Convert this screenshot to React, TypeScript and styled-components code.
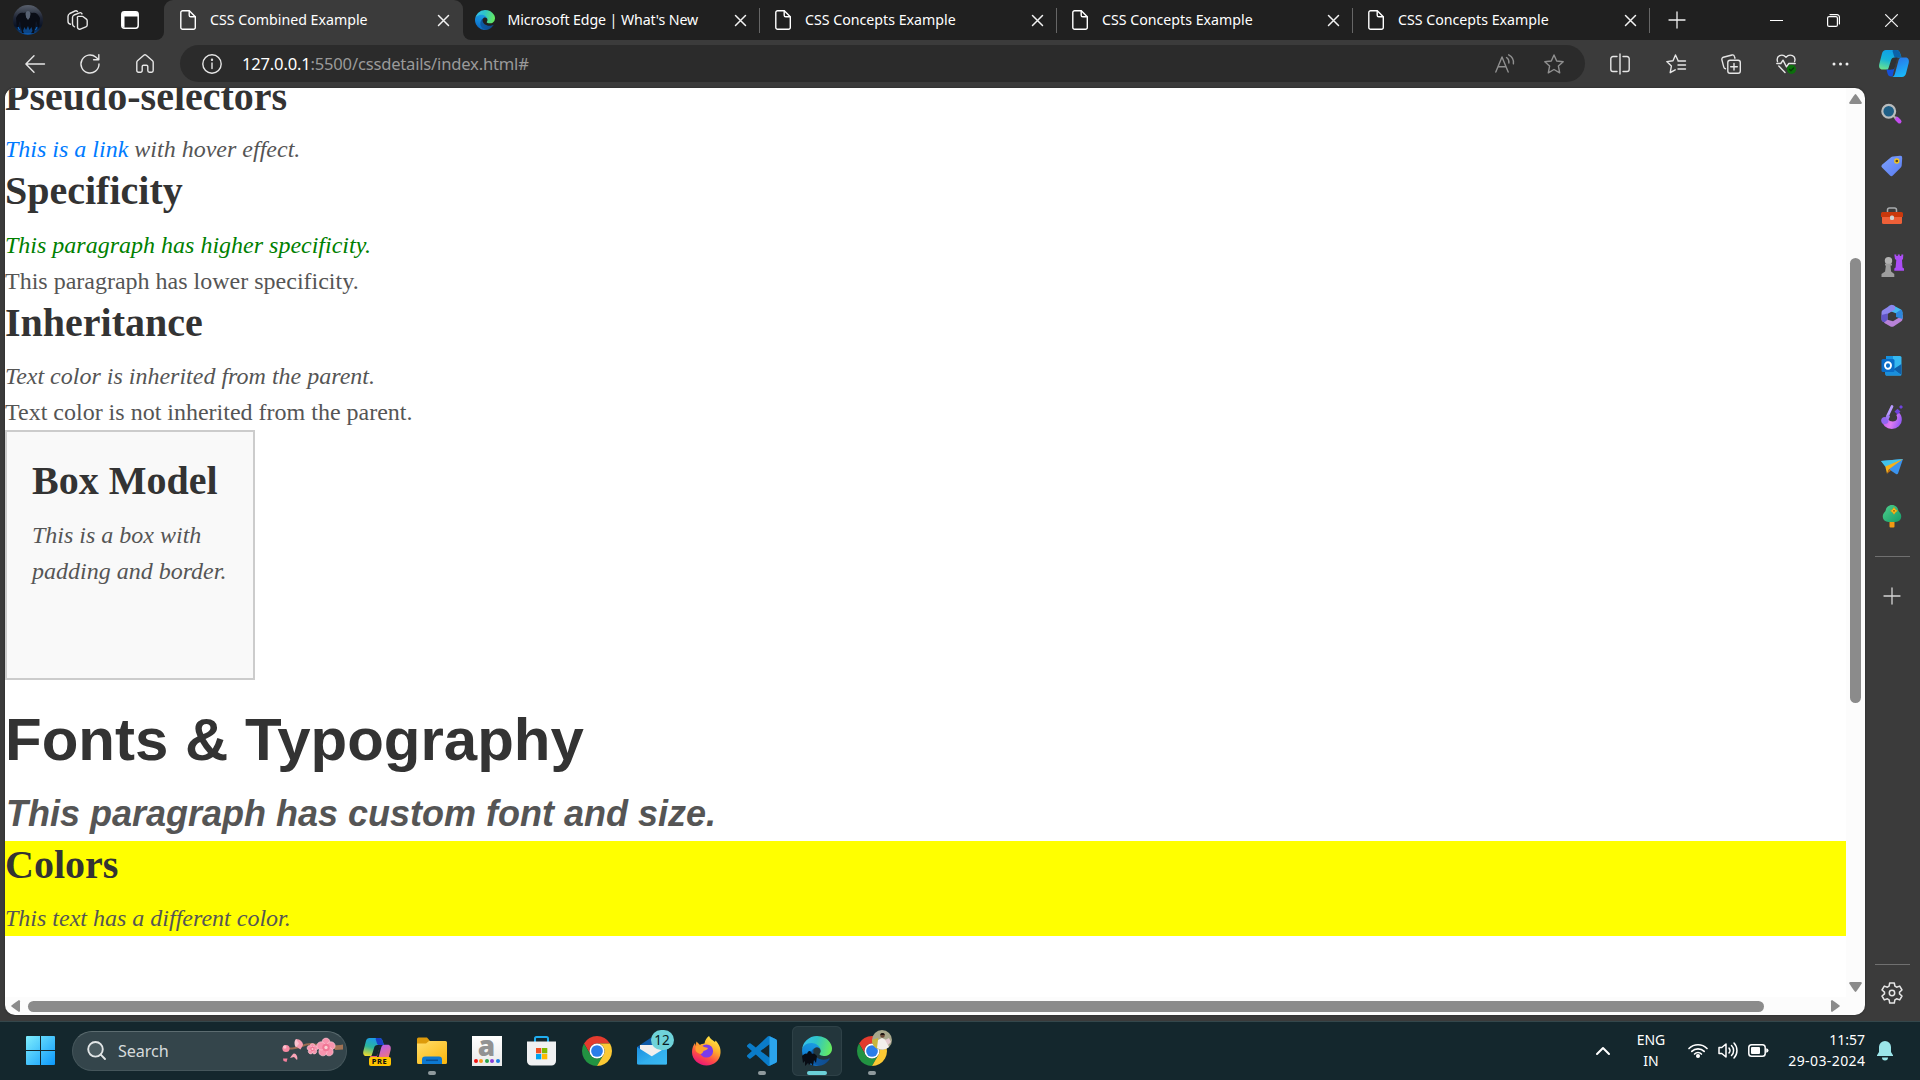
import React from "react";
import styled, { createGlobalStyle } from "styled-components";

const uiFont = `"Segoe UI", "Noto Sans", "Open Sans", sans-serif`;

const Global = createGlobalStyle`
  * { box-sizing: border-box; }
  body { margin: 0; overflow: hidden; background: #3b3b3b; font-family: ${uiFont}; }
  svg { display: block; flex: none; overflow: visible; }
`;

/* ---------- window frame ---------- */

const Screen = styled.div`
  width: 1920px;
  height: 1080px;
  display: flex;
  flex-direction: column;
  background: #3b3b3b;
  overflow: hidden;
`;

const TabStrip = styled.header`
  height: 40px;
  display: flex;
  background: #3b3b3b;
  color: #fff;
`;

const StripStart = styled.div`
  width: 164px;
  display: flex;
  align-items: center;
  background: #202020;
  border-bottom-right-radius: 8px;
`;

const StripRest = styled.div`
  flex: 1;
  display: flex;
  align-items: center;
  background: #202020;
  border-bottom-left-radius: 8px;
`;

const Slot = styled.div<{ $w: number; $h?: number }>`
  width: ${(p) => p.$w}px;
  ${(p) => (p.$h ? `height: ${p.$h}px;` : "")}
  flex: none;
  display: flex;
  align-items: center;
  justify-content: center;
`;

const ActiveBack = styled.div`
  width: 299px;
  background: linear-gradient(#202020 50%, #3b3b3b 50%);
`;

const Tab = styled.div<{ $w: number; $pad: number; $active?: boolean }>`
  width: ${(p) => p.$w}px;
  height: 40px;
  flex: none;
  display: flex;
  align-items: center;
  padding-left: ${(p) => p.$pad}px;
  border-radius: 9px 9px 0 0;
  background: ${(p) => (p.$active ? "#3b3b3b" : "transparent")};
`;

const TabTitle = styled.span<{ $gap: number; $tight?: boolean }>`
  flex: 1;
  margin-left: ${(p) => p.$gap}px;
  font-size: 14.2px;
  letter-spacing: ${(p) => (p.$tight ? "-0.1px" : "0")};
  line-height: 20px;
  white-space: nowrap;
`;

const TabEnd = styled.div<{ $line?: boolean }>`
  width: 38px;
  height: 25px;
  display: flex;
  align-items: center;
  justify-content: center;
  border-right: 1px solid ${(p) => (p.$line ? "#666" : "transparent")};
`;

const Spacer = styled.div`
  flex: 1;
`;

const Toolbar = styled.nav`
  height: 48px;
  display: flex;
  align-items: center;
  padding: 0 0 1px 7px;
  color: #e6e6e6;
`;

const AddressBar = styled.div`
  width: 1405px;
  height: 37px;
  margin-left: 8px;
  border-radius: 19px;
  background: #2b2b2b;
  display: flex;
  align-items: center;
  padding: 0 8px 0 10px;
`;

const Url = styled.span`
  flex: 1;
  margin-left: 8px;
  font-size: 16.6px;
  letter-spacing: -0.2px;
  color: #9a9a9a;
  b { font-weight: 400; color: #fff; }
`;

/* ---------- page ---------- */

const Middle = styled.main`
  height: 933px;
  display: flex;
  padding-left: 5px;
`;

const Viewport = styled.div`
  width: 1860px;
  height: 927px;
  display: grid;
  grid-template-columns: 1841px 19px;
  grid-template-rows: 909px 18px;
  background: #fcfcfc;
  border-radius: 10px;
  overflow: hidden;
  box-shadow: 0 0 2px #222;
`;

const Doc = styled.article`
  overflow: hidden;
  background: #fff;
  color: #555;
  font-family: "Times New Roman", "Liberation Serif", serif;
  font-size: 24px;
  line-height: 36px;
`;

const Scrolled = styled.div`
  margin-top: -14px;
`;

const H2 = styled.h2<{ $before?: number; $after?: number }>`
  margin: 0;
  padding: ${(p) => p.$before ?? 0}px 0 ${(p) => p.$after ?? 12.5}px;
  font-size: 40px;
  line-height: 46px;
  color: #333;
`;

const H1 = styled.h1`
  margin: 25px 0 13.5px;
  font-family: Arial, "Liberation Sans", sans-serif;
  font-size: 60px;
  line-height: 69px;
  color: #333;
`;

const P = styled.p<{ $plain?: boolean; $green?: boolean }>`
  margin: 0;
  font-style: ${(p) => (p.$plain ? "normal" : "italic")};
  color: ${(p) => (p.$green ? "#008000" : "#555")};
`;

const CustomP = styled(P)`
  padding-left: 1px;
  font-family: Arial, "Liberation Sans", sans-serif;
  font-weight: 700;
  font-size: 36px;
  line-height: 54px;
`;

const Link = styled.a`
  color: #007bff;
`;

const Box = styled.section`
  width: 250px;
  height: 250px;
  padding: 25px;
  border: 2px solid #ccc;
  background: #f9f9f9;
`;

const Yellow = styled.section`
  background: #ff0;
`;

const VScroll = styled.div`
  display: flex;
  flex-direction: column;
  align-items: center;
  padding: 6px 0 5px 0;
  justify-content: space-between;
`;

const HScroll = styled.div`
  display: flex;
  align-items: center;
  padding: 0 6px 0 6px;
  justify-content: space-between;
`;

const Thumb = styled.div<{ $vertical?: boolean }>`
  background: #8b8b8b;
  border-radius: 6px;
  ${(p) =>
    p.$vertical
      ? "width: 11px; height: 445px; margin: 154px 0 auto;"
      : "width: 1736px; height: 11px; margin: 0 auto 0 8px;"}
`;

const Sidebar = styled.aside`
  width: 55px;
  padding-right: 1px;
  display: flex;
  flex-direction: column;
  align-items: center;
  color: #ddd;
`;

const SideRule = styled.div`
  width: 35px;
  height: 1px;
  background: #707070;
`;

/* ---------- taskbar ---------- */

const Taskbar = styled.footer`
  height: 59px;
  display: flex;
  align-items: center;
  padding-bottom: 1px;
  background: #14272d;
  border-top: 1px solid #34474b;
  color: #fff;
`;

const SearchBox = styled.div`
  width: 275px;
  height: 40px;
  margin: 0 2px 0 17px;
  border-radius: 20px;
  border: 1px solid #45565b;
  border-top-color: #5c6c70;
  background: #34454b;
  display: flex;
  align-items: center;
  padding: 0 3px 0 14px;
`;

const SearchLabel = styled.span`
  flex: 1;
  margin-left: 12px;
  font-size: 16.2px;
  letter-spacing: -0.1px;
  color: #d6dbdc;
`;

const AppSlot = styled.div<{ $focused?: boolean }>`
  position: relative;
  width: 50px;
  height: 50px;
  margin: 0 2.5px;
  flex: none;
  border-radius: 6px;
  display: flex;
  align-items: center;
  justify-content: center;
  background: ${(p) => (p.$focused ? "#23363c" : "transparent")};
  box-shadow: ${(p) => (p.$focused ? "inset 0 0 0 1px #2e4147" : "none")};
`;

const Indicator = styled.i<{ $focused?: boolean }>`
  position: absolute;
  bottom: 1px;
  left: 50%;
  transform: translateX(-50%);
  width: ${(p) => (p.$focused ? 20 : 8)}px;
  height: 4px;
  border-radius: 2px;
  background: ${(p) => (p.$focused ? "#6bd0d8" : "#8f9a9d")};
`;

const Badge = styled.span`
  position: absolute;
  top: 4px;
  left: 24px;
  width: 23px;
  height: 20px;
  border-radius: 10px;
  background: #6fd3da;
  color: #0b1d22;
  font-size: 13.5px;
  line-height: 20px;
  text-align: center;
`;

const Pre = styled.span`
  position: absolute;
  top: 31px;
  left: 17px;
  width: 22px;
  height: 9px;
  border-radius: 2px;
  background: #ffc400;
  color: #111;
  font-size: 7.5px;
  font-weight: 800;
  letter-spacing: 0.5px;
  line-height: 9px;
  text-align: center;
`;

const ATile = styled.div`
  width: 30px;
  height: 30px;
  background: linear-gradient(#fff, #e8e8e8);
  display: flex;
  flex-direction: column;
  align-items: center;
  span {
    font: 800 28px/22px "Open Sans", sans-serif;
    height: 20px;
    margin-top: -2px;
    color: #929292;
  }
`;

const Dots = styled.div`
  display: flex;
  gap: 1.5px;
  margin-top: 5px;
`;

const Dot = styled.i<{ $c: string }>`
  width: 4px;
  height: 4px;
  border-radius: 50%;
  background: ${(p) => p.$c};
`;

const TrayText = styled.div<{ $align: string; $w: number }>`
  width: ${(p) => p.$w}px;
  text-align: ${(p) => p.$align};
  font-size: 14px;
  line-height: 20.5px;
  white-space: nowrap;
`;

const DateText = styled.span`
  letter-spacing: 0.4px;
  margin-right: -0.4px;
`;

/* ---------- icons ---------- */

const line = { fill: "none", stroke: "currentColor", strokeWidth: 1.4, strokeLinecap: "round", strokeLinejoin: "round" } as const;

const Avatar = () => (
  <svg width="30" height="30" viewBox="0 0 30 30">
    <defs>
      <linearGradient id="av" x2="0" y2="1"><stop stopColor="#59606c" /><stop offset=".4" stopColor="#222838" /><stop offset=".7" stopColor="#0a1326" /><stop offset="1" stopColor="#0b4f9c" /></linearGradient>
    </defs>
    <circle cx="15" cy="15" r="15" fill="url(#av)" />
    <path d="M3 13c2-5 5-6 8-5 1-1 7-1 8 0 3-1 6 0 8 5l-1 11-3-8-2 12h-12L7 16l-3 8z" fill="#0a0d16" />
    <path d="M12.500 9c0-4 5-4 5 0l-.7 3.500L15 15l-1.800-2.500z" fill="#586273" />
    <path d="M10 26l1.500-4 1.500 3 2-4 1.500 4 2-3 1 4-2 3h-6z" fill="#0d5fb8" opacity=".7" />
    <path d="M5 22l1.500 3M24 22l-1.500 3" stroke="#0d6fd0" strokeWidth="1" />
  </svg>
);

const Workspaces = () => (
  <svg width="21" height="20" viewBox="0 0 21 20" {...line} stroke="#e6e6e6" strokeWidth="1.4">
    <path d="M10.500 6.800a1 1 0 0 1 1-.4h3.700a2 2 0 0 1 1 .3l3.200 2.400a2 2 0 0 1 .8 1.600v4.200a2 2 0 0 1-1.300 1.900l-5.600 2.300a2 2 0 0 1-2.800-1.800V8a1.500 1.500 0 0 1 0-1.200z" />
    <path d="M7.500 16.800a3 3 0 0 1-2-2.800V7.500A3 3 0 0 1 7 5l5.500-2.200a2 2 0 0 1 2.500 1.100" />
    <path d="M3.500 14.200A3 3 0 0 1 1 11.200V6.500a3.500 3.500 0 0 1 1.800-3L8 1a2 2 0 0 1 2.500.6" />
  </svg>
);

const TabActions = () => (
  <svg width="18" height="18" viewBox="0 0 18 18">
    <rect x=".8" y=".8" width="16.400" height="16.400" rx="2.600" fill="none" stroke="#fff" strokeWidth="1.500" />
    <path d="M1 3.400A2.400 2.400 0 0 1 3.400 1h11.200A2.400 2.400 0 0 1 17 3.400V5.600H1zM1 5h2.500v12L1 15z" fill="#fff" />
  </svg>
);

const DocIcon = () => (
  <svg width="16" height="20" viewBox="0 0 16 20" {...line} stroke="#fff">
    <path d="M2.700.8h6.600l6 6v10.700a1.800 1.800 0 0 1-1.800 1.800H2.700A1.800 1.800 0 0 1 .8 17.500V2.600A1.800 1.800 0 0 1 2.700.8z" />
    <path d="M9.200 1v4.200A1.600 1.600 0 0 0 10.800 6.800H15" />
  </svg>
);

const Cross = ({ s = 11, w = 1.5 }: { s?: number; w?: number }) => (
  <svg width={s} height={s} viewBox="0 0 11 11" {...line} stroke="#f2f2f2" strokeWidth={w}>
    <path d="M.5.5l10 10M10.500.5l-10 10" />
  </svg>
);

const Plus = ({ c }: { c: string }) => (
  <svg width="16" height="16" viewBox="0 0 16 16" {...line} stroke={c} strokeWidth="1.300"><path d="M8 0v16M0 8h16" /></svg>
);

const EdgeLogo = ({ s }: { s: number }) => (
  <svg width={s} height={s} viewBox="0 0 256 256">
    <defs>
      <linearGradient id="e1" x1=".2" x2="1"><stop stopColor="#0c59a4" /><stop offset="1" stopColor="#114a8b" /></linearGradient>
      <linearGradient id="e2" x1=".6" y1="0" x2=".3" y2="1"><stop stopColor="#1b9de2" /><stop offset=".5" stopColor="#1386d8" /><stop offset="1" stopColor="#0b63bd" /></linearGradient>
      <linearGradient id="e3" x1="0" y1=".3" x2="1" y2=".5"><stop stopColor="#35c1f1" /><stop offset=".45" stopColor="#2fc4c8" /><stop offset="1" stopColor="#66eb5e" /></linearGradient>
    </defs>
    <path fill="url(#e1)" d="M231 190.500c-3.400 1.800-6.900 3.400-10.500 4.700a101.500 101.500 0 0 1-35.900 6.500c-47.300 0-88.500-32.500-88.500-74.300a31.500 31.500 0 0 1 16.400-27.300c-42.800 1.800-53.800 46.400-53.800 72.500 0 74 68.100 81.400 82.800 81.400 7.900 0 19.800-2.300 27-4.600l1.300-.4a128.300 128.300 0 0 0 66.600-52.800 4 4 0 0 0-5.400-5.700z" />
    <path fill="url(#e2)" d="M105.700 241.400a79.200 79.200 0 0 1-22.700-21.300 80.700 80.700 0 0 1 29.500-120c3.200-1.500 8.500-4.100 15.600-4a32.400 32.400 0 0 1 25.700 13 31.900 31.900 0 0 1 6.300 18.700c0-.2 24.500-79.600-80-79.600-43.900 0-80 41.600-80 78.200a130.200 130.200 0 0 0 12.100 56 128 128 0 0 0 156.400 67 75.500 75.500 0 0 1-62.800-8z" />
    <path fill="url(#e3)" d="M152.300 148.900c-.9 1-3.400 2.500-3.400 5.600 0 2.600 1.700 5.200 4.800 7.300 14.400 10.100 41.600 8.800 41.700 8.800a59.600 59.600 0 0 0 30.300-8.400 61.400 61.400 0 0 0 30.400-52.800c.3-22.400-8-37.300-11.300-43.900C223.500 23.900 177.700 0 128 0A128 128 0 0 0 0 126.200c.5-36.500 36.800-66 80-66 3.500 0 23.500.3 42 10a72.600 72.600 0 0 1 30.900 29.300c6.100 10.600 7.200 24.100 7.200 29.500s-2.700 13.400-7.800 19.900z" />
  </svg>
);

const Back = () => (
  <svg width="20" height="18" viewBox="0 0 20 18" {...line}><path d="M9 .8L.9 9 9 17.200M1 9h18.500" /></svg>
);
const Refresh = () => (
  <svg width="20" height="20" viewBox="0 0 20 20" {...line}><path d="M19 10a9 9 0 1 1-3-6.700l2.500 2.200M18.800.6v5.200h-5.200" /></svg>
);
const Home = () => (
  <svg width="18" height="19" viewBox="0 0 18 19" {...line}>
    <path d="M.8 8.300a2 2 0 0 1 .7-1.500L7.800 1.200a1.800 1.800 0 0 1 2.400 0l6.300 5.600a2 2 0 0 1 .7 1.500v8.300a1.600 1.600 0 0 1-1.600 1.600h-2.200a1.600 1.600 0 0 1-1.600-1.600v-4a1.300 1.300 0 0 0-1.300-1.300h-3a1.300 1.300 0 0 0-1.300 1.300v4a1.600 1.600 0 0 1-1.600 1.600H2.400A1.600 1.600 0 0 1 .8 16.600z" />
  </svg>
);
const Info = () => (
  <svg width="20" height="20" viewBox="0 0 20 20" {...line}><circle cx="10" cy="10" r="9.200" /><path d="M10 9v5.500" /><circle cx="10" cy="5.800" r=".5" fill="currentColor" /></svg>
);
const ReadAloud = () => (
  <svg width="20" height="20" viewBox="0 0 20 20" {...line} stroke="#909090"><path d="M.8 18L7 3l6.200 15M3 12.800h8M11.500 3.500c2 1.200 2.600 3.300 2.400 5.500M13.700.8c3.500 1.900 5.300 5 4.700 9" /></svg>
);
const Star = () => (
  <svg width="20" height="20" viewBox="0 0 20 20" {...line} stroke="#909090"><path d="M10 1l2.700 6 6.500.7-4.800 4.400 1.300 6.700L10 15.500l-5.700 3.300 1.300-6.700L.8 7.700 7.300 7z" /></svg>
);
const Split = () => (
  <svg width="20" height="20" viewBox="0 0 20 20" {...line}><path d="M10 0v20M7 2.500H3A2.200 2.200 0 0 0 .8 4.700v10.600A2.200 2.200 0 0 0 3 17.500h4M13 2.500h4a2.200 2.200 0 0 1 2.200 2.200v10.600a2.200 2.200 0 0 1-2.200 2.200h-4" /></svg>
);
const Favourites = () => (
  <svg width="20" height="20" viewBox="0 0 20 20" {...line}><path d="M12 6.500L9.500 1 7 6.800l-6.200.8 4.600 4.400-1.200 6.700 5-2.900M12 7h7.500M12 11h7.500M12 15h7.500" /></svg>
);
const Collections = () => (
  <svg width="20" height="20" viewBox="0 0 20 20" {...line}>
    <rect x="6.800" y="6.300" width="12.500" height="13" rx="2.200" /><path d="M13 9.500v6.600M9.700 12.800h6.600M14 4.200l-.6-1.800A2 2 0 0 0 11 1L2.300 3.300A2 2 0 0 0 .9 5.800l1.900 7.400a2 2 0 0 0 1.700 1.500" />
  </svg>
);
const Health = () => (
  <svg width="20" height="20" viewBox="0 0 20 20" {...line}>
    <path d="M1.500 7.500C-.2 2 6-1 10 3.200 14-1 20.500 2 18.600 7.500M2.800 12l6.200 6.500M.8 9.500h4L7 6.200l3.500 6.600 2.300-3.300h6.400" />
    <circle cx="15.500" cy="15.300" r="4.600" fill="#0c700c" stroke="none" /><path d="M13.600 15.500l1.300 1.300 2.700-2.800" stroke="#073d07" />
  </svg>
);
const More = () => (
  <svg width="17" height="4" viewBox="0 0 17 4"><circle cx="2" cy="2" r="1.500" fill="#eee" /><circle cx="8.500" cy="2" r="1.500" fill="#eee" /><circle cx="15" cy="2" r="1.500" fill="#eee" /></svg>
);

const CopilotLogo = ({ pre }: { pre?: boolean }) => (
  <svg width={pre ? 28 : 30} height={pre ? 25 : 27} viewBox="0 0 30 27">
    <defs>
      <linearGradient id={pre ? "c1p" : "c1"} x1=".5" x2=".2" y2="1"><stop stopColor={pre ? "#1c9bea" : "#0f9fe8"} /><stop offset=".5" stopColor={pre ? "#2bb59b" : "#16b4d8"} /><stop offset="1" stopColor={pre ? "#f1dc2c" : "#6be38d"} /></linearGradient>
      <linearGradient id={pre ? "c2p" : "c2"} x1=".3" x2=".7" y2="1"><stop stopColor={pre ? "#b45cf5" : "#2b73e8"} /><stop offset="1" stopColor={pre ? "#ff7a5c" : "#18bdfb"} /></linearGradient>
    </defs>
    <path d="M7 0h10.500c2 0 3 1.300 3.600 3.300l1.400 4.200H17L9 19.500H3.500C.6 19.500-.4 17 .3 14L3 3.500C3.600 1.300 5 0 7 0z" fill={`url(#${pre ? "c1p" : "c1"})`} />
    <path d="M14 0h3.500c2 0 3 1.300 3.600 3.300l1.400 4.200H17c-1 0-1.600-.5-2-1.600L13.500 1z" fill={pre ? "#1940c8" : "#0b62a8"} />
    <path d="M7.500 19.500H12l4-12 2 0-4.500 19H12c-2 0-2.900-1.200-3.500-3z" fill={pre ? "#e85d7c" : "#1550d8"} />
    <path d="M23 27H12.800c1.600 0 2.600-1.300 3.200-3.500l3.500-13c.6-2 1.500-3.100 3.500-3.100h3.500c2.900 0 3.900 2.600 3.200 5.600L27 23.500C26.400 25.700 25 27 23 27z" fill={`url(#${pre ? "c2p" : "c2"})`} />
    <path d="M18.500 7.500h-3.100c-2 0-2.900 1-3.500 3l-2.800 9h4.300c1.500 0 2-1 2.500-2.500z" fill={pre ? "#14272d" : "#2f3133"} />
  </svg>
);

const Tri = ({ d }: { d: "u" | "d" | "l" | "r" }) => {
  const paths = { u: "M6.500 0Q7.300 0 13 9Q12.500 10 11.500 10H1.500Q.5 10 0 9Q5.700 0 6.500 0z", d: "M6.500 10Q5.700 10 0 1Q.5 0 1.500 0h10Q12.500 0 13 1Q7.300 10 6.500 10z", l: "M0 6Q0 5.400 8 0Q9 .3 9 1.300v9.400Q9 11.700 8 12Q0 6.600 0 6z", r: "M9 6Q9 5.400 1 0Q0 .3 0 1.300v9.400Q0 11.700 1 12Q9 6.600 9 6z" };
  const v = d === "u" || d === "d";
  return <svg width={v ? 13 : 9} height={v ? 10 : 12} viewBox={v ? "0 0 13 10" : "0 0 9 12"}><path d={paths[d]} fill="#8b8b8b" /></svg>;
};

const side = { width: 22, height: 22, viewBox: "0 0 22 22" };

const SideSearch = () => (
  <svg {...side}>
    <path d="M15.500 15.500l3 3" stroke="#c44df0" strokeWidth="4" strokeLinecap="round" /><path d="M12 12.500l2.800 2.800" stroke="#aaa" strokeWidth="2" />
    <circle cx="7.700" cy="8.200" r="6.400" fill="#1f5f86" stroke="#b9bcbd" strokeWidth="2.200" />
  </svg>
);
const SideTag = () => (
  <svg {...side}>
    <defs><linearGradient id="tg" y2="1"><stop stopColor="#7da2ff" /><stop offset="1" stopColor="#5a7cf0" /></linearGradient></defs>
    <path d="M12 1.500L19 .8a2 2 0 0 1 2.200 2.200l-.5 7.500a3 3 0 0 1-.9 2l-8 8a2 2 0 0 1-2.800 0l-8-8a2 2 0 0 1 0-2.800l9-7.500a3 3 0 0 1 2-.7z" fill="url(#tg)" />
    <circle cx="15.800" cy="6" r="2" fill="#5b4a1c" stroke="#f4c51c" strokeWidth="1.300" />
  </svg>
);
const SideToolbox = () => (
  <svg width="22" height="18" viewBox="0 0 22 18">
    <path d="M6.500 5V3a2 2 0 0 1 2-2h5a2 2 0 0 1 2 2v2" fill="none" stroke="#a9acae" strokeWidth="1.500" />
    <path d="M1 9h20v6.500a1.500 1.500 0 0 1-1.500 1.500h-17A1.500 1.500 0 0 1 1 15.500z" fill="#ee6038" />
    <path d="M1.500 5h19a1.500 1.500 0 0 1 1.500 1.500V10H0V6.500A1.500 1.500 0 0 1 1.500 5z" fill="#c9380c" /><rect x="9" y="8.500" width="4" height="4.500" rx="1.500" fill="#cfd2d3" />
  </svg>
);
const SideChess = () => (
  <svg width="23" height="23" viewBox="0 0 23 23">
    <path d="M13.300.5h2v1.600h1.500V.5h2v1.600h1.500V.5h2l-.3 4.500-1 1 .5 7.500 1.500 1v2.300h-9.700v-2.300l1.300-1 .7-7.500-1.300-1z" fill="#ab4df5" />
    <circle cx="7.500" cy="6.800" r="3.700" fill="#b2b2b2" /><path d="M4 9.800h7v1.800H9.500l.6 6 3.200 2.400V23H.5v-3l3.600-2.400.8-6H4z" fill="#9d9d9d" />
  </svg>
);
const Side365 = () => (
  <svg {...side}>
    <path d="M8 .8L12 .3l8 4.200 1.500 3V14l-6-3V8.500L6 5z" fill="#45b8f0" /><path d="M11.500 0a2 2 0 0 0-2 .3L2 5a3 3 0 0 0-1.500 2.700v6.500a3 3 0 0 0 1.500 2.600l4.500 1.500V9l7.500-4.500V1z" fill="#8d86ee" />
    <path d="M6.500 8.500v7.500l-1 2.800L2 16.800a3 3 0 0 1-1.500-2.600V10z" fill="#6155c8" />
    <path d="M21.500 10v4a3 3 0 0 1-1.500 2.600l-7.500 4.800a3 3 0 0 1-3 0L3 17.800l3.500-3 5.500 1.500 6.500-4z" fill="#b882d8" /><path d="M20 4.500a3 3 0 0 1 1.500 2.600V14l-6.500-2V8z" fill="#2d86dc" />
    <path d="M11 7l4 2.300v3.600L11 15.200l-3.800-2.300V9.300z" fill="#3b3b3b" />
  </svg>
);
const SideOutlook = () => (
  <svg {...side}>
    <path d="M5 1h14a1.500 1.500 0 0 1 1.500 1.500V19a1.500 1.500 0 0 1-1.500 1.500H5z" fill="#35b8f1" /><path d="M5 1h7v8H5z" fill="#1792df" /><path d="M20.500 9v11L12 14.500z" fill="#0f5fa8" /><path d="M4 15h10l6.500 5.500H5.500A1.500 1.500 0 0 1 4 19z" fill="#1a8fdc" />
    <rect x=".5" y="4" width="13" height="13" rx="1.500" fill="#0a6cc7" /><ellipse cx="7" cy="10.500" rx="3" ry="3.300" fill="none" stroke="#fff" strokeWidth="1.900" />
  </svg>
);
const SideDesigner = () => (
  <svg width="22" height="24" viewBox="0 0 22 24">
    <defs><linearGradient id="ds" x2="1" y2=".3"><stop stopColor="#b44df0" /><stop offset=".6" stopColor="#e07cf2" /><stop offset="1" stopColor="#9a5cf5" /></linearGradient></defs>
    <path d="M.8 15a10 9 0 0 0 20 0c.3-3-1-6-3-7.500l-2.500 2.600c2 3.400.5 6.400-3.500 6.400-2.500 0-3.500-1-4.500-2z" fill="url(#ds)" />
    <path d="M11 1.500L6.500 11" stroke="#b99bff" strokeWidth="2.800" strokeLinecap="round" /><circle cx="3.800" cy="15.500" r="3.600" fill="#9266ee" /><path d="M4.500 12l3-2.500 1.500 2-2 4z" fill="#9e79f2" />
    <path d="M16.500 3.800l3 2.700-3 3-3-3zM20 0l2 2-2 2-2-2z" fill="#6f43dc" />
  </svg>
);
const SideDrop = () => (
  <svg width="22" height="16" viewBox="0 0 22 16">
    <path d="M0 2l22-2-5 14.500q-.7 1.300-2 .5l-6-4z" fill="#3b93ee" /><path d="M0 2l22-2L4.500 8z" fill="#42c3ea" /><path d="M22 0L4.300 7.600 6 14.800l2-4.500z" fill="#f5b21b" /><path d="M6 14.800l2-4.500 2 1.200z" fill="#c76e11" />
  </svg>
);
const SideTree = () => (
  <svg width="18" height="23" viewBox="0 0 18 23">
    <defs><linearGradient id="tr" y2="1"><stop stopColor="#4fd08c" /><stop offset="1" stopColor="#159c68" /></linearGradient></defs>
    <rect x="6.500" y="15" width="5" height="7.500" rx="1" fill="#f29a13" /><path d="M9 0c4 0 6 3 6.500 6 3 3 3.500 6 1.700 8.700C15.500 17 12 17 9 17s-6.500 0-8.200-2.300C-1 12-.5 9 2.500 6 3 3 5 0 9 0z" fill="url(#tr)" />
    <path d="M11 2.500l1.300 2 2 1.300-2 1.400-1.300 2-1.300-2-2-1.400 2-1.300z" fill="#ffc21c" stroke="#ed9c10" strokeWidth=".8" /><circle cx="11" cy="5.800" r=".9" fill="#9a5600" />
  </svg>
);
const Gear = () => (
  <svg {...side} {...line} stroke="#e6e6e6" strokeWidth="1.500">
    <path d="M8.700 1h4.600l.6 3.200 1.700 1 3.100-1.100L21 8l-2.500 2.100v1.800L21 14l-2.300 3.900-3.100-1.100-1.700 1-.6 3.200H8.700l-.6-3.200-1.700-1-3.100 1.100L1 14l2.500-2.100v-1.800L1 8l2.300-3.900 3.100 1.100 1.700-1z" /><circle cx="11" cy="11" r="2.700" />
  </svg>
);

const StartLogo = () => (
  <svg width="29" height="29" viewBox="0 0 29 29">
    <defs><linearGradient id="wn" x2="1" y2="1"><stop stopColor="#7feefd" /><stop offset="1" stopColor="#0c98fb" /></linearGradient></defs>
    <path d="M0 1a1 1 0 0 1 1-1h13v14H0zM15 0h13a1 1 0 0 1 1 1v13H15zM0 15h14v14H1a1 1 0 0 1-1-1zM15 15h14v13a1 1 0 0 1-1 1H15z" fill="url(#wn)" />
  </svg>
);
const SearchGlyph = () => (
  <svg width="19" height="19" viewBox="0 0 19 19" fill="none" stroke="#e2e6e7" strokeWidth="1.900" strokeLinecap="round"><circle cx="8.500" cy="8.300" r="7.300" fill="#4b5c61" /><path d="M13.800 13.600l4.200 4.400" /></svg>
);

const Flower = ({ x, y, r, c = "#f794ae" }: { x: number; y: number; r: number; c?: string }) => (
  <g>
    {[0, 72, 144, 216, 288].map((a) => (
      <ellipse key={a} cx={x} cy={y - r * 0.56} rx={r * 0.44} ry={r * 0.46} fill={c} stroke="#fcc9d4" strokeWidth=".6" transform={`rotate(${a} ${x} ${y})`} />
    ))}
    <circle cx={x} cy={y} r={r * 0.4} fill="#f07795" />
    <circle cx={x} cy={y} r={r * 0.18} fill="#fbd0d4" />
  </g>
);

const Blossom = () => (
  <svg width="61" height="26" viewBox="0 0 61 26">
    <path d="M61 8.500c-8-1-14 1-21-.5-8-2-13-3-20 0-6 2-10 3-14 2.500M61 10c-9 0-16 0-24-1" fill="none" stroke="#9a6a50" strokeWidth="2" />
    <path d="M61 6.500l-8 1.500v4l8-.5z" fill="#a27355" />
    <circle cx="4" cy="10.500" r="3.600" fill="#f78ba4" /><circle cx="2.800" cy="9" r="1.700" fill="#fcc3cf" />
    <path d="M14 1c4 0 7 3 7 6l-2.500 4.500-4.500-3z" fill="#f79db2" /><path d="M14 1l3 4.500-3 4c-2-2-2-7 0-8.500z" fill="#fbc4d0" />
    <Flower x={30.5} y={11} r={5.4} /><Flower x={44} y={9.500} r={9.200} />
    <path d="M8 20c2-3 3-4.500 4-4.500 3 0 4 5 3 6.500l-3-3z" fill="#f9a4b7" /><path d="M1 20.500h4.500l-1 3.500-3-1z" fill="#f57f9c" />
  </svg>
);

const Folder = () => (
  <svg width="30" height="28" viewBox="0 0 30 28">
    <defs><linearGradient id="fd" x2=".8" y2="1"><stop stopColor="#ffdd6b" /><stop offset="1" stopColor="#fbb912" /></linearGradient></defs>
    <path d="M0 2a1.500 1.500 0 0 1 1.500-1.500H10L13 4H28v10H0z" fill="#dd9a0b" /><path d="M0 6.500h9l3-2.500h16.500A1.500 1.500 0 0 1 30 5.500v20a1.500 1.500 0 0 1-1.500 1.500h-27A1.500 1.500 0 0 1 0 25.500z" fill="url(#fd)" />
    <path d="M5 27v-4.500a3 3 0 0 1 3-3h14a3 3 0 0 1 3 3V27z" fill="#0d78d0" /><path d="M9 23.300h12" stroke="#0b4f92" strokeWidth="1.500" />
  </svg>
);
const Store = () => (
  <svg width="29" height="30" viewBox="0 0 29 30">
    <path d="M8 7V2.500A1.500 1.500 0 0 1 9.500 1h10A1.500 1.500 0 0 1 21 2.500V7" fill="none" stroke="#20aef0" strokeWidth="2" /><path d="M0 5.500h29V25a4.500 4.500 0 0 1-4.500 4.500h-20A4.500 4.500 0 0 1 0 25z" fill="#f0f1f2" />
    <path d="M9 12h5.300v5.300H9z" fill="#f25022" /><path d="M15 12h5.300v5.300H15z" fill="#7fba00" /><path d="M9 18h5.300v5.300H9z" fill="#00a4ef" /><path d="M15 18h5.300v5.300H15z" fill="#ffb900" />
  </svg>
);
const Chrome = () => (
  <svg width="30" height="30" viewBox="2 2 44 44">
    <path d="M24 13H43.050A22 22 0 0 0 4.950 13L14.470 29.500A11 11 0 0 1 24 13z" fill="#e33b2e" /><path d="M4.950 13A22 22 0 0 0 24 46L33.530 29.500A11 11 0 0 1 14.470 29.500z" fill="#229342" /><path d="M43.050 13A22 22 0 0 1 24 46L33.530 29.500A11 11 0 0 0 24 13z" fill="#fcc934" />
    <circle cx="24" cy="24" r="11" fill="#fff" /><circle cx="24" cy="24" r="8.600" fill="#2a7de9" />
  </svg>
);
const Mail = () => (
  <svg width="30" height="28" viewBox="0 0 30 28">
    <defs><linearGradient id="ml" x2="1" y2="1"><stop stopColor="#1a8fe0" /><stop offset="1" stopColor="#45c6f7" /></linearGradient></defs>
    <path d="M0 10L15 0l15 10v6H0z" fill="#0e5aa8" /><path d="M3 8h24v7L15 21 3 14z" fill="#f1efee" /><path d="M0 10l15 9.500L30 10v16.500a1 1 0 0 1-1 1H1a1 1 0 0 1-1-1z" fill="url(#ml)" /><path d="M30 10v16.500a1 1 0 0 1-1 1H1z" fill="#33b0ee" opacity=".6" />
  </svg>
);
const Firefox = () => (
  <svg width="29" height="30" viewBox="0 0 29 30">
    <defs><linearGradient id="ff" x1=".8" x2=".3" y2="1"><stop stopColor="#fff04a" /><stop offset=".4" stopColor="#ffae2b" /><stop offset=".7" stopColor="#ff4f45" /><stop offset="1" stopColor="#e9127a" /></linearGradient></defs>
    <path d="M17 0c1 3 4 4 6 6l.5-1.500C27 8 29 12 28.500 17 28 24.500 22 29.500 14.500 29.500S0 24 0 16c0-4 1.500-7 3-9l.5 3 1-4.500L8 9c1-1 3-1.300 4.500-1.500C13 4 15 1.500 17 0z" fill="url(#ff)" />
    <circle cx="14.500" cy="15" r="6.600" fill="#7a3bea" /><path d="M4 10c3-1.500 6-1 8 1 1.500.5 3 .5 4 1-.5 2-3 2-4.500 3-1 3-3 3.500-4.500 2.500C3 16 3 13 4 10z" fill="#ffa02e" />
  </svg>
);
const VsCode = () => (
  <svg width="30" height="30" viewBox="0 0 100 100">
    <path fill="#0a7cc9" d="M96.460 10.600 75.860.87a6.230 6.230 0 0 0-7.100 1.200L29.350 38.040 12.190 25.010a4.160 4.160 0 0 0-5.320.24L1.360 30.260a4.170 4.170 0 0 0 0 6.160L16.250 50 1.360 63.580a4.170 4.170 0 0 0 0 6.160l5.510 5.010a4.160 4.160 0 0 0 5.320.24l17.160-13.030 39.410 35.960a6.220 6.220 0 0 0 7.100 1.210l20.600-9.910A6.250 6.250 0 0 0 100 83.580V16.410a6.250 6.250 0 0 0-3.540-5.810zM75.010 72.700 45.110 50l29.900-22.700z" />
    <path fill="#2ba4ec" d="M75 1l21.500 9.600A6.250 6.250 0 0 1 100 16.400v67.200a6.250 6.250 0 0 1-3.500 5.600L75 99z" />
  </svg>
);

const BatOverlay = styled.div`
  position: absolute;
  left: 10px;
  top: 25px;
`;
const Bat = () => (
  <svg width="15" height="15" viewBox="0 0 15 15"><path d="M0 5c2-2 4-3 5-2 1-4 4-4 5 0 2-1 3 0 5 2l-1 7-2-3-1 6-2-3-2 2-1-2-3 3v-5l-2 2z" fill="#080c14" /></svg>
);
const ProfileOverlay = styled.div`
  position: absolute;
  left: 25px;
  top: 4px;
`;
const Profile = () => (
  <svg width="20" height="20" viewBox="0 0 20 20">
    <circle cx="10" cy="10" r="10" fill="#a8a88c" /><path d="M0 10a10 10 0 0 0 7 9.500L6 8z" fill="#c8b63c" /><path d="M5 18l1-8 4-2 4 2 3 7a10 10 0 0 1-12 1z" fill="#f3efec" /><circle cx="10.500" cy="5.500" r="2.300" fill="#6b4a38" /><path d="M8.300 5c0-2.600 4.400-2.600 4.400 0z" fill="#1d1512" /><path d="M13 10l4-2 2 4-3 3z" fill="#e5cbd0" />
  </svg>
);

const Chevron = () => <svg width="14" height="8" viewBox="0 0 14 8" {...line} strokeWidth="2"><path d="M1 7l6-6 6 6" /></svg>;
const Wifi = () => (
  <svg width="20" height="15" viewBox="0 0 20 15" {...line} strokeWidth="1.700"><path d="M1 5.500a12.700 12.700 0 0 1 18 0M3.800 8.400a8.700 8.700 0 0 1 12.400 0M6.600 11a5 5 0 0 1 6.800 0" /><circle cx="10" cy="13" r="1.200" fill="#fff" /></svg>
);
const Volume = () => (
  <svg width="20" height="17" viewBox="0 0 20 17" {...line} strokeWidth="1.500"><path d="M1 5.500h2.800L8 2v13l-4.200-3.500H1zM11 6a4 4 0 0 1 0 5M13.500 3.500a7 7 0 0 1 0 10M16 1a11 11 0 0 1 0 15" /></svg>
);
const Battery = () => (
  <svg width="21" height="13" viewBox="0 0 21 13"><rect x=".8" y=".8" width="16.400" height="11.400" rx="2.800" fill="none" stroke="#fff" strokeWidth="1.500" /><rect x="3" y="3" width="9" height="7" rx="1" fill="#fff" /><path d="M18.200 4.300q2.300.3 2.300 2.200t-2.300 2.200z" fill="#fff" /></svg>
);
const Bell = () => (
  <svg width="16" height="19" viewBox="0 0 16 19"><path d="M8 0a6 6 0 0 1 6 6v5l2 3.300V15H0v-.7L2 11V6a6 6 0 0 1 6-6z" fill="#9be6ea" /><path d="M5 16.500h6a3 3 0 0 1-6 0z" fill="#9be6ea" /></svg>
);

/* ---------- screen ---------- */

const sideIcons = [SideSearch, SideTag, SideToolbox, SideChess, Side365, SideOutlook, SideDesigner, SideDrop, SideTree];

export default function App() {
  return (
    <Screen>
      <Global />
      <TabStrip>
        <StripStart>
          <Slot $w={56}><Avatar /></Slot>
          <Slot $w={43}><Workspaces /></Slot>
          <Slot $w={62}><TabActions /></Slot>
        </StripStart>
        <ActiveBack>
          <Tab $w={299} $pad={16} $active>
            <DocIcon />
            <TabTitle $gap={14}>CSS Combined Example</TabTitle>
            <TabEnd><Cross /></TabEnd>
          </Tab>
        </ActiveBack>
        <StripRest>
          <Tab $w={297} $pad={12}>
            <EdgeLogo s={20} />
            <TabTitle $gap={12.5} $tight>Microsoft Edge | What's New</TabTitle>
            <TabEnd $line><Cross /></TabEnd>
          </Tab>
          {[297, 296, 297].map((w, i) => (
            <Tab key={i} $w={w} $pad={15}>
              <DocIcon />
              <TabTitle $gap={14}>CSS Concepts Example</TabTitle>
              <TabEnd $line><Cross /></TabEnd>
            </Tab>
          ))}
          <Slot $w={54}><Plus c="#f0f0f0" /></Slot>
          <Spacer />
          <Slot $w={56}><svg width="13" height="1"><path d="M0 .5h13" stroke="#fff" /></svg></Slot>
          <Slot $w={58}>
            <svg width="13" height="13" viewBox="0 0 13 13" {...line} stroke="#fff" strokeWidth="1.200"><rect x=".6" y="2.600" width="9.800" height="9.800" rx="1.500" /><path d="M3 .6h7a2.400 2.400 0 0 1 2.400 2.400v7" /></svg>
          </Slot>
          <Slot $w={58}><Cross s={13} w={1.1} /></Slot>
        </StripRest>
      </TabStrip>

      <Toolbar>
        <Slot $w={55}><Back /></Slot>
        <Slot $w={55}><Refresh /></Slot>
        <Slot $w={55}><Home /></Slot>
        <AddressBar>
          <Slot $w={44}><Info /></Slot>
          <Url><b>127.0.0.1</b>:5500/cssdetails/index.html#</Url>
          <Slot $w={52}><ReadAloud /></Slot>
          <Slot $w={46}><Star /></Slot>
        </AddressBar>
        <Slot $w={69}><Split /></Slot>
        <Slot $w={43}><Favourites /></Slot>
        <Slot $w={67}><Collections /></Slot>
        <Slot $w={43}><Health /></Slot>
        <Slot $w={67}><More /></Slot>
        <Slot $w={39}><CopilotLogo /></Slot>
      </Toolbar>

      <Middle>
        <Viewport>
          <Doc>
            <Scrolled>
              <H2 $after={10.5}>Pseudo-selectors</H2>
              <P><Link>This is a link</Link> with hover effect.</P>
              <H2 $before={1.5} $after={13}>Specificity</H2>
              <P $green>This paragraph has higher specificity.</P>
              <P $plain>This paragraph has lower specificity.</P>
              <H2 $before={1} $after={11.5}>Inheritance</H2>
              <P>Text color is inherited from the parent.</P>
              <P $plain>Text color is not inherited from the parent.</P>
              <Box>
                <H2 $before={1} $after={13.5}>Box Model</H2>
                <P>This is a box with padding and border.</P>
              </Box>
              <H1>Fonts &amp; Typography</H1>
              <CustomP>This paragraph has custom font and size.</CustomP>
              <Yellow>
                <H2 $before={1} $after={11.5}>Colors</H2>
                <P>This text has a different color.</P>
              </Yellow>
            </Scrolled>
          </Doc>
          <VScroll><Tri d="u" /><Thumb $vertical /><Tri d="d" /></VScroll>
          <HScroll><Tri d="l" /><Thumb /><Tri d="r" /></HScroll>
        </Viewport>
        <Sidebar>
          {sideIcons.map((Icon, i) => (
            <Slot key={i} $w={54} $h={i === 0 ? 52.500 : 50.200}><Icon /></Slot>
          ))}
          <Slot $w={54} $h={28}><SideRule /></Slot>
          <Slot $w={54} $h={51.500}><Plus c="#d5d5d5" /></Slot>
          <Spacer />
          <SideRule />
          <Slot $w={54} $h={56}><Gear /></Slot>
        </Sidebar>
      </Middle>

      <Taskbar>
        <Slot $w={26} />
        <StartLogo />
        <SearchBox>
          <SearchGlyph />
          <SearchLabel>Search</SearchLabel>
          <Blossom />
        </SearchBox>
        <AppSlot><CopilotLogo pre /><Pre>PRE</Pre></AppSlot>
        <AppSlot><Folder /><Indicator /></AppSlot>
        <AppSlot>
          <ATile>
            <span>a</span>
            <Dots>{["#f01010", "#f79a1c", "#27a348", "#8a3fd8", "#1b7fe0"].map((c) => <Dot key={c} $c={c} />)}</Dots>
          </ATile>
        </AppSlot>
        <AppSlot><Store /></AppSlot>
        <AppSlot><Chrome /></AppSlot>
        <AppSlot><Mail /><Badge>12</Badge></AppSlot>
        <AppSlot><Firefox /></AppSlot>
        <AppSlot><VsCode /><Indicator /></AppSlot>
        <AppSlot $focused><EdgeLogo s={30} /><BatOverlay><Bat /></BatOverlay><Indicator $focused /></AppSlot>
        <AppSlot><Chrome /><ProfileOverlay><Profile /></ProfileOverlay><Indicator /></AppSlot>
        <Spacer />
        <Slot $w={48}><Chevron /></Slot>
        <TrayText $w={48} $align="center">ENG<br />IN</TrayText>
        <Slot $w={46}><Wifi /></Slot>
        <Slot $w={14}><Volume /></Slot>
        <Slot $w={46}><Battery /></Slot>
        <TrayText $w={84} $align="right">11:57<br /><DateText>29-03-2024</DateText></TrayText>
        <Slot $w={40}><Bell /></Slot>
        <Slot $w={15} />
      </Taskbar>
    </Screen>
  );
}
